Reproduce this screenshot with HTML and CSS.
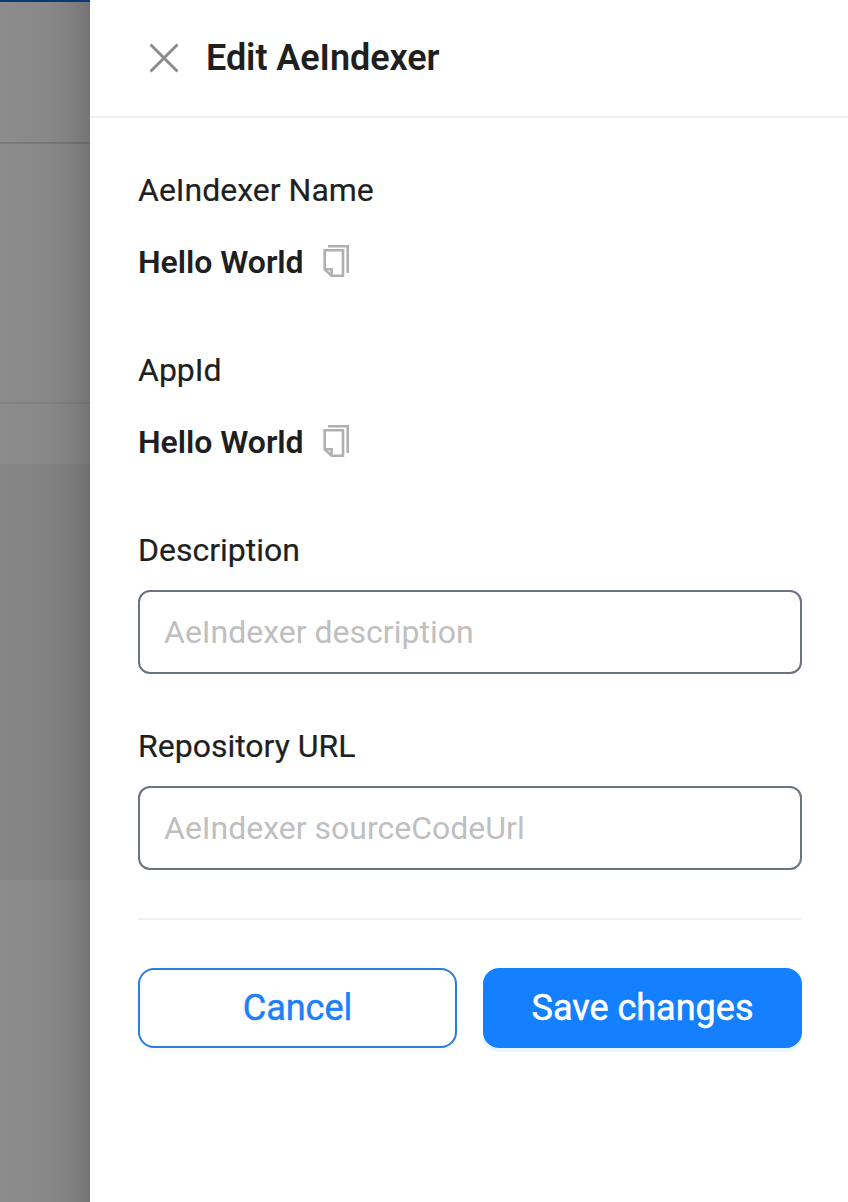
FILE: index.html
```html
<!DOCTYPE html>
<html lang="en">
<head>
<meta charset="utf-8">
<title>Edit AeIndexer</title>
<link rel="stylesheet" href="styles.css">
</head>
<body>
<div class="page">
  <aside class="backdrop">
    <div class="backdrop-header"></div>
    <div class="backdrop-block"></div>
    <div class="backdrop-row"></div>
    <div class="backdrop-panel"></div>
    <div class="backdrop-rest"></div>
  </aside>
  <main class="drawer">
    <header class="drawer-header">
      <svg class="close" viewBox="0 0 32 32"><path d="M2.5 2.5L29.5 29.5M29.5 2.5L2.5 29.5"/></svg>
      <h1 class="title">Edit AeIndexer</h1>
    </header>
    <form class="form">
      <section class="info">
        <div class="label">AeIndexer Name</div>
        <div class="value"><span class="value-text">Hello World</span><svg class="copy" viewBox="0 0 26 32"><path d="M5 1.3H24.7V28M1.7 5.3H20V30.7H8.6L1.7 24.5ZM1.7 24.3H8.6V30.7"/></svg></div>
      </section>
      <section class="info">
        <div class="label">AppId</div>
        <div class="value"><span class="value-text">Hello World</span><svg class="copy" viewBox="0 0 26 32"><path d="M5 1.3H24.7V28M1.7 5.3H20V30.7H8.6L1.7 24.5ZM1.7 24.3H8.6V30.7"/></svg></div>
      </section>
      <label class="field"><span class="label">Description</span><input class="input" placeholder="AeIndexer description"></label>
      <label class="field"><span class="label">Repository URL</span><input class="input" placeholder="AeIndexer sourceCodeUrl"></label>
      <div class="actions">
        <button class="button cancel" type="button">Cancel</button>
        <button class="button save" type="button">Save changes</button>
      </div>
    </form>
  </main>
</div>
</body>
</html>
```
FILE: styles.css
```css
* { box-sizing: border-box; }
body { margin: 0; font-family: Roboto, sans-serif; color: #1f1f1f; }
.page { display: flex; height: 1202px; overflow: hidden; }
.backdrop { width: 90px; display: flex; flex-direction: column; background: linear-gradient(90deg, #8c8c8c 0%, #888 50%, #808080 80%, #747474 100%); }
.backdrop-header { height: 144px; border-top: 2px solid #073a78; border-bottom: 2px solid rgba(0, 0, 0, .12); }
.backdrop-block { height: 260px; border-bottom: 2px solid rgba(0, 0, 0, .06); }
.backdrop-row { height: 60px; }
.backdrop-panel { height: 416px; background: rgba(0, 0, 0, .04); }
.backdrop-rest { flex: 1; }
.drawer { width: 758px; background: #fff; }
.drawer-header { height: 118px; padding-left: 58px; border-bottom: 2px solid #f0f0f0; display: flex; align-items: center; gap: 26px; }
.close { width: 32px; height: 32px; fill: none; stroke: #8c8c8c; stroke-width: 3; }
.title { margin: 0; font-size: 36px; line-height: 48px; font-weight: 600; letter-spacing: -.06px; }
.form { padding: 48px 46px 0 48px; }
.info { height: 180px; }
.label { display: block; height: 48px; font-size: 32px; line-height: 48px; -webkit-text-stroke: .2px; }
.value { height: 48px; margin-top: 24px; display: flex; align-items: center; font-size: 32px; font-weight: 600; }
.value-text { width: 185px; letter-spacing: -.05px; }
.copy { width: 26px; height: 32px; margin-bottom: 2px; fill: none; stroke: #b0b0b0; stroke-width: 2.6; }
.field { display: block; height: 196px; }
.input { display: block; width: 100%; height: 84px; margin-top: 16px; padding: 0 24px; border: 2px solid #6b7280; border-radius: 12px; background: #fff; font: 32px/48px Roboto, sans-serif; }
.input::placeholder { color: #bfbfbf; opacity: 1; }
.actions { border-top: 2px solid #f0f0f0; padding-top: 48px; display: grid; grid-template-columns: 319px 319px; gap: 26px; }
.button { height: 80px; border: 2px solid #1580ff; border-radius: 16px; font: 400 36px/48px Roboto, sans-serif; -webkit-text-stroke: .5px; }
.cancel { color: #1f7ffa; border-color: #2a7de1; background: #fff; box-shadow: 0 4px 0 rgba(0, 0, 0, .02); }
.save { color: #fff; background: #1580ff; box-shadow: 0 4px 0 #e6f5ff; }
```
